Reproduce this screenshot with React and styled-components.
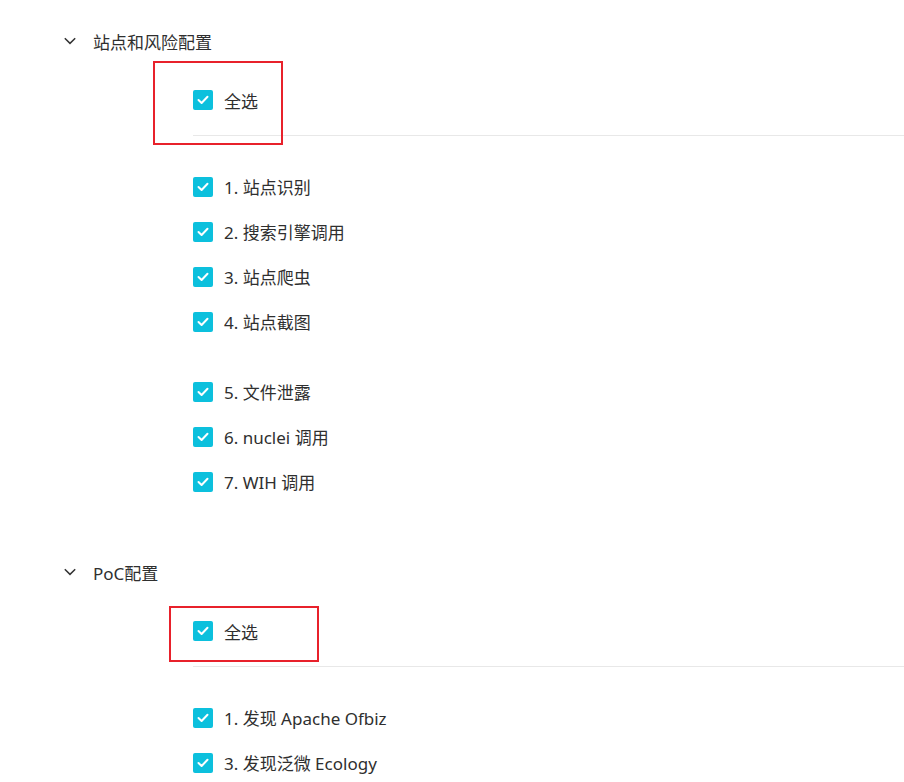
import styled, { createGlobalStyle } from "styled-components";

const GlobalStyle = createGlobalStyle`
  html, body {
    margin: 0;
    padding: 0;
    background: #ffffff;
  }
  body {
    font-family: "Noto Sans", "Noto Sans CJK SC", sans-serif;
    color: #333333;
  }
`;

// Page
const Page = styled.div`
  width: 904px;
  height: 782px;
  overflow: hidden;
  padding-top: 21px;
  box-sizing: border-box;
`;

// Section
const Section = styled.section`
  margin-top: ${(p) => p.$top || 0}px;
`;

// Header
const Header = styled.div`
  display: flex;
  align-items: center;
  height: 40px;
  padding-left: 64px;
  gap: 17px;
  font-size: 17px;
  color: #2f2f2f;
`;

// Body
const Body = styled.div`
  padding-left: 193px;
`;

// SelectRow
const SelectRow = styled.div`
  position: relative;
  margin-top: 19px;
  height: 40px;
  display: flex;
  align-items: center;
`;

// Mark (red annotation box)
const Mark = styled.div`
  position: absolute;
  left: ${(p) => p.$left}px;
  top: ${(p) => p.$top}px;
  width: ${(p) => p.$w}px;
  height: ${(p) => p.$h}px;
  border: 2px solid #e8212b;
  box-sizing: border-box;
  pointer-events: none;
`;

// Divider
const Divider = styled.div`
  margin-top: 15px;
  height: 1px;
  background: #e8e8e8;
`;

// List
const List = styled.div`
  margin-top: 28px;
`;

// Group
const Group = styled.div`
  & + & {
    margin-top: 25px;
  }
`;

// Item
const Item = styled.label`
  display: flex;
  align-items: center;
  height: 45px;
  gap: 11px;
  font-size: 17px;
  color: #2f2f2f;
  white-space: nowrap;
`;

// Box
const Box = styled.span`
  width: 20px;
  height: 20px;
  flex: none;
  border-radius: 2px;
  background: #0cc0dd;
  display: flex;
  align-items: center;
  justify-content: center;
`;

const Check = () => (
  <Box>
    <svg width="12" height="10" viewBox="0 0 12 10">
      <polyline points="1.5,5 4.6,8 10.5,1.8" fill="none" stroke="#ffffff" strokeWidth="2" strokeLinecap="round" strokeLinejoin="round" />
    </svg>
  </Box>
);

const Chevron = () => (
  <svg width="12" height="8" viewBox="0 0 12 8">
    <polyline points="0.8,1.2 6,6.4 11.2,1.2" fill="none" stroke="#333333" strokeWidth="1.5" />
  </svg>
);

const sections = [
  {
    title: "站点和风险配置",
    top: 0,
    mark: { left: -40, top: -19, w: 130, h: 84 },
    groups: [
      ["1. 站点识别", "2. 搜索引擎调用", "3. 站点爬虫", "4. 站点截图"],
      ["5. 文件泄露", "6. nuclei 调用", "7. WIH 调用"],
    ],
  },
  {
    title: "PoC配置",
    top: 48,
    mark: { left: -24, top: -5, w: 150, h: 56 },
    groups: [["1. 发现 Apache Ofbiz", "3. 发现泛微 Ecology"]],
  },
];

const App = () => {
  return (
    <Page>
      <GlobalStyle />
      {sections.map((s) => (
        <Section key={s.title} $top={s.top}>
          <Header>
            <Chevron />
            <span>{s.title}</span>
          </Header>
          <Body>
            <SelectRow>
              <Mark $left={s.mark.left} $top={s.mark.top} $w={s.mark.w} $h={s.mark.h} />
              <Item as="div">
                <Check />
                <span>全选</span>
              </Item>
            </SelectRow>
            <Divider />
            <List>
              {s.groups.map((g, i) => (
                <Group key={i}>
                  {g.map((t) => (
                    <Item key={t}>
                      <Check />
                      <span>{t}</span>
                    </Item>
                  ))}
                </Group>
              ))}
            </List>
          </Body>
        </Section>
      ))}
    </Page>
  );
};

export default App;
